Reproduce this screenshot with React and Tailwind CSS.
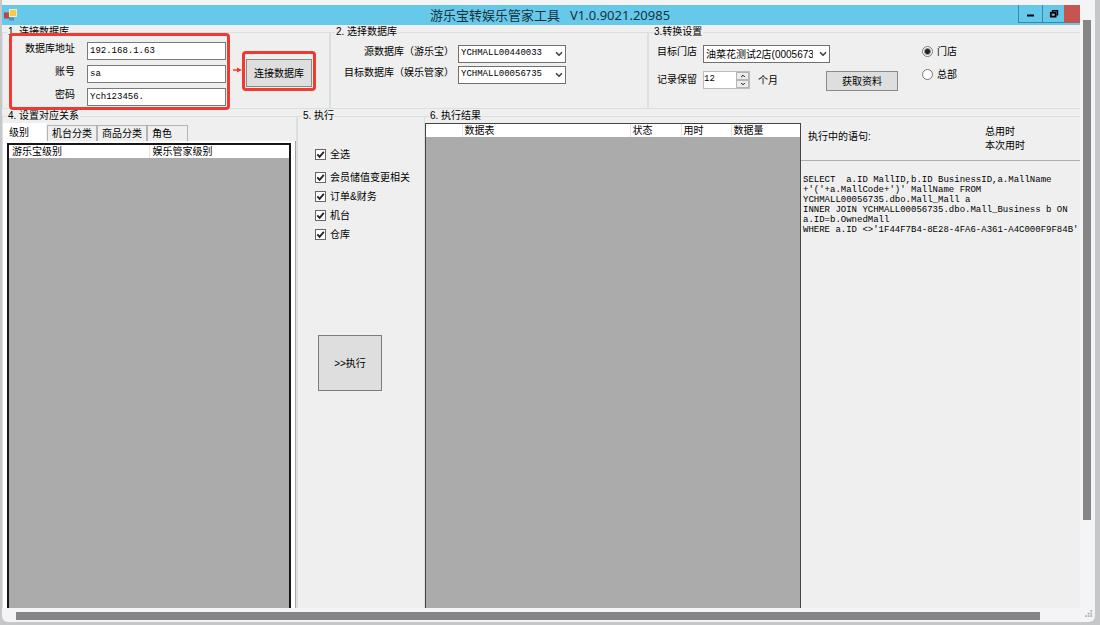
import React from "react";
import { ChevronDown, ChevronUp } from "lucide-react";

function Group({ title, className = "", children }) {
  return (
    <fieldset className={"min-w-0 border border-[#dcdfe2] " + className}>
      <legend className="ml-1 px-px leading-[14px]">{title}</legend>
      {children}
    </fieldset>
  );
}

function Field({ id, label, value, type = "text" }) {
  return (
    <>
      <label htmlFor={id} className="text-right leading-[14px]">{label}</label>
      <input
        id={id}
        type={type}
        defaultValue={value}
        className="h-[18px] w-full border border-[#7a7a7a] bg-white px-0.5 font-['Liberation_Mono',monospace] text-[9px] outline-none"
      />
    </>
  );
}

function Combo({ id, value, className = "" }) {
  return (
    <span className={"relative block h-[18px] " + className}>
      <select
        id={id}
        defaultValue={value}
        className="h-full w-full appearance-none overflow-hidden text-clip border border-[#707070] bg-white pl-0.5 pr-4 outline-none"
      >
        <option>{value}</option>
      </select>
      <ChevronDown className="pointer-events-none absolute right-0.5 top-1 size-[10px] text-[#444]" strokeWidth={4} />
    </span>
  );
}

function Check({ label }) {
  return (
    <label className="flex h-[19px] items-center gap-1">
      <span className="relative size-[11px]">
        <input type="checkbox" defaultChecked className="peer block size-full appearance-none border border-[#666] bg-white" />
        <svg viewBox="0 0 11 11" className="pointer-events-none absolute inset-0 hidden peer-checked:block" fill="none" stroke="#222" strokeWidth="1.8">
          <path d="M2.3 5.3 4.6 7.8 8.8 2.8" />
        </svg>
      </span>
      {label}
    </label>
  );
}

function Radio({ label, checked }) {
  return (
    <label className="flex h-[23px] items-center gap-1">
      <input
        type="radio"
        name="scope"
        defaultChecked={checked}
        className="size-[11px] appearance-none rounded-full border border-[#777] bg-white checked:bg-[radial-gradient(circle,#222_0_2px,#fff_4px)]"
      />
      {label}
    </label>
  );
}

const sql = `SELECT  a.ID MallID,b.ID BusinessID,a.MallName
+'('+a.MallCode+')' MallName FROM
YCHMALL00056735.dbo.Mall_Mall a
INNER JOIN YCHMALL00056735.dbo.Mall_Business b ON
a.ID=b.OwnedMall
WHERE a.ID <>'1F44F7B4-8E28-4FA6-A361-A4C000F9F84B'`;

const tabs = ["机台分类", "商品分类", "角色"];
const mono = "font-['Liberation_Mono','Noto_Sans_CJK_SC',monospace] text-[9px]";

function TitleBar() {
  return (
    <header className="flex h-5 items-start bg-[#67c9ea]">
      <svg viewBox="0 0 14 12" className="ml-0.5 mt-1 h-3 w-3.5">
        <rect x="0.5" y="4" width="5" height="5" fill="#c4473c" stroke="#9b4a52" />
        <rect x="5.5" y="0.5" width="7" height="7" fill="#f6c84c" stroke="#fbe9b0" />
        <rect x="5" y="8.5" width="5" height="3" fill="#4d8fd0" />
      </svg>
      <h1 className="flex-1 whitespace-pre pl-16 text-center font-['Noto_Sans','Noto_Sans_CJK_SC',sans-serif] text-[13px] leading-5 text-[#17323d]">
        游乐宝转娱乐管家工具{"   "}V1.0.9021.20985
      </h1>
      <div className="flex h-[18px]">
        <button aria-label="最小化" className="flex w-6 items-center justify-center border-b border-l border-[#3d87a3]">
          <svg viewBox="0 0 10 10" className="size-2.5"><path d="M1 6.5h7" stroke="#000" strokeWidth="2" /></svg>
        </button>
        <button aria-label="还原" className="flex w-[22px] items-center justify-center border-b border-l border-[#3d87a3]">
          <svg viewBox="0 0 10 10" className="size-2.5" fill="none" stroke="#000">
            <path d="M3.5 3V1.7h5v4H7.5" strokeWidth="1.4" />
            <rect x="1.8" y="3.8" width="4.8" height="3.8" strokeWidth="1.8" />
          </svg>
        </button>
        <button aria-label="关闭" className="w-4 bg-[#c5554f]" />
      </div>
    </header>
  );
}

export default function App() {
  return (
    <div className="h-screen overflow-hidden bg-[#c6c7c9] pb-[3px] pl-0.5 pr-[5px] font-['Liberation_Sans','Noto_Sans_CJK_SC',sans-serif] text-[10px] text-black">
      <div className="flex h-full flex-col rounded-b-md bg-[#f4f4f6]">
        <div className="flex min-h-0 flex-1 pt-[5px]">
          <main className="flex min-w-0 flex-1 flex-col bg-[#efefef]">
            <TitleBar />
            <div className="grid grid-cols-[328px_318px_1fr]">
              <Group title="1. 连接数据库" className="h-[84px]">
                <div className="flex items-start">
                  <div className="relative ml-2 grid w-[217px] grid-cols-[64px_139px] gap-x-3 gap-y-[5px] pt-[3px]">
                    <Field id="host" label="数据库地址" value="192.168.1.63" />
                    <Field id="user" label="账号" value="sa" />
                    <Field id="pass" label="密码" value="Ych123456." />
                    <span className="pointer-events-none absolute -bottom-1 -left-0.5 -right-0.5 -top-1.5 rounded-sm border-[3px] border-[#ee3a30]" />
                  </div>
                  <svg viewBox="0 0 12 10" className="ml-1 mt-[26px] h-2.5 w-3">
                    <path d="M1 5h5" stroke="#ee3a30" strokeWidth="1.4" />
                    <path d="M5 2.5 10 5 5 7.5Z" fill="#ee3a30" />
                  </svg>
                  <div className="relative ml-0.5 mt-5">
                    <button className="h-7 w-[66px] border border-[#8a8a8a] bg-[#dedede]">连接数据库</button>
                    <span className="pointer-events-none absolute -inset-x-1 -bottom-1 -top-2 rounded-sm border-[3px] border-[#ee3a30]" />
                  </div>
                </div>
              </Group>
              <Group title="2. 选择数据库" className="h-[84px]">
                <div className="grid grid-cols-[123px_108px] gap-x-1 gap-y-[3px] pt-1.5">
                  <label htmlFor="source" className="text-right leading-[14px]">源数据库（游乐宝）</label>
                  <Combo id="source" value="YCHMALL00440033" className={mono} />
                  <label htmlFor="target" className="text-right leading-[14px]">目标数据库（娱乐管家）</label>
                  <Combo id="target" value="YCHMALL00056735" className={mono} />
                </div>
              </Group>
              <Group title="3.转换设置" className="h-[84px] border-r-0">
                <div className="flex">
                  <div className="grid grid-cols-[46px_127px] content-start gap-y-2 pl-2 pt-1.5">
                    <label htmlFor="shop" className="leading-[14px]">目标门店</label>
                    <Combo id="shop" value="油菜花测试2店(00056735)" />
                    <label htmlFor="months" className="leading-[18px]">记录保留</label>
                    <div className="flex h-[18px] items-center gap-2">
                      <div className="flex h-full w-[47px] border border-[#bdbdbd] bg-white">
                        <input id="months" defaultValue="12" className={"w-8 min-w-0 flex-1 outline-none " + mono} />
                        <div className="flex w-[13px] flex-col">
                          <button aria-label="增加" className="flex flex-1 items-center justify-center border border-[#b5b5b5] bg-[#ececec]"><ChevronUp className="size-1.5" strokeWidth={4} /></button>
                          <button aria-label="减少" className="flex flex-1 items-center justify-center border border-[#b5b5b5] bg-[#ececec]"><ChevronDown className="size-1.5" strokeWidth={4} /></button>
                        </div>
                      </div>
                      <span>个月</span>
                    </div>
                  </div>
                  <button className="-ml-1 mt-8 h-5 w-[72px] border border-[#8a8a8a] bg-[#dedede]">获取资料</button>
                  <div className="ml-6 pt-px">
                    <Radio label="门店" checked />
                    <Radio label="总部" />
                  </div>
                </div>
              </Group>
            </div>
            <div className="grid min-h-0 flex-1 grid-cols-[295px_128px_1fr]">
              <Group title="4. 设置对应关系" className="flex flex-col border-b-0">
                <div role="tablist" className="flex h-[18px] items-end">
                  <button role="tab" aria-selected="true" className="mr-px h-[18px] w-[43px] bg-white pl-1.5 text-left">级别</button>
                  {tabs.map((t) => (
                    <button key={t} role="tab" className="h-4 border border-b-0 border-[#b4b4b4] px-1 text-left last:w-[41px]">{t}</button>
                  ))}
                </div>
                <div className="min-h-0 flex-1 border-r border-[#a5a5a5] bg-white px-1 pt-0.5">
                  <div className="h-full border-2 border-b-0 border-[#161616] bg-[#ababab]">
                    <table className="w-full table-fixed bg-white text-left">
                      <thead>
                        <tr className="h-[13px] leading-[13px]">
                          <th className="border-r border-[#e4e4e4] pl-[3px] font-normal">游乐宝级别</th>
                          <th className="pl-[3px] font-normal">娱乐管家级别</th>
                        </tr>
                      </thead>
                    </table>
                  </div>
                </div>
              </Group>
              <Group title="5. 执行" className="border-b-0">
                <div className="flex flex-col items-start pl-[17px] pt-[22px]">
                  <Check label="全选" />
                  <div className="mt-1">
                    <Check label="会员储值变更相关" />
                    <Check label="订单&amp;财务" />
                    <Check label="机台" />
                    <Check label="仓库" />
                  </div>
                  <button className="ml-[3px] mt-[91px] h-14 w-16 border border-[#7d7d7d] bg-[#dedede]">&gt;&gt;执行</button>
                </div>
              </Group>
              <Group title="6. 执行结果" className="flex flex-col border-x-0 border-b-0">
                <div className="flex min-h-0 flex-1">
                  <div className="w-[376px] border-x border-t border-[#444] bg-[#ababab]">
                    <table className="w-full table-fixed bg-white text-left">
                      <colgroup>
                        <col className="w-9" /><col /><col className="w-[51px]" /><col className="w-[50px]" /><col className="w-[69px]" />
                      </colgroup>
                      <thead>
                        <tr className="h-[13px] leading-[13px]">
                          <td className="border-r border-[#e4e4e4]" />
                          <th className="border-r border-[#e4e4e4] pl-0.5 font-normal">数据表</th>
                          <th className="border-r border-[#e4e4e4] pl-0.5 font-normal">状态</th>
                          <th className="border-r border-[#e4e4e4] pl-0.5 font-normal">用时</th>
                          <th className="pl-0.5 font-normal">数据量</th>
                        </tr>
                      </thead>
                    </table>
                  </div>
                  <section className="min-w-0 flex-1">
                    <div className="flex h-[38px] border-b border-[#b0b0b0] pl-[7px] pt-px">
                      <p className="w-[177px] pt-1.5 leading-[14px]">执行中的语句:</p>
                      <div className="pt-px leading-[14px]">
                        <p>总用时</p>
                        <p>本次用时</p>
                      </div>
                    </div>
                    <pre className="pl-0.5 pt-3.5 font-['Liberation_Mono',monospace] text-[9px] leading-[10px]">{sql}</pre>
                  </section>
                </div>
              </Group>
            </div>
          </main>
          <div className="w-[15px] px-[3px] pt-[15px]">
            <div className="h-[85%] w-2 bg-[#858585]" />
          </div>
        </div>
        <div className="relative h-3.5 pl-3.5 pr-[55px] pt-1">
          <div className="h-2 bg-[#858585]" />
          <svg viewBox="0 0 9 9" className="absolute bottom-1 right-0.5 size-2" fill="#b0b0b0">
            <path d="M6 0h2v2H6zM3 3h2v2H3zM6 3h2v2H6zM0 6h2v2H0zM3 6h2v2H3zM6 6h2v2H6z" />
          </svg>
        </div>
      </div>
    </div>
  );
}
